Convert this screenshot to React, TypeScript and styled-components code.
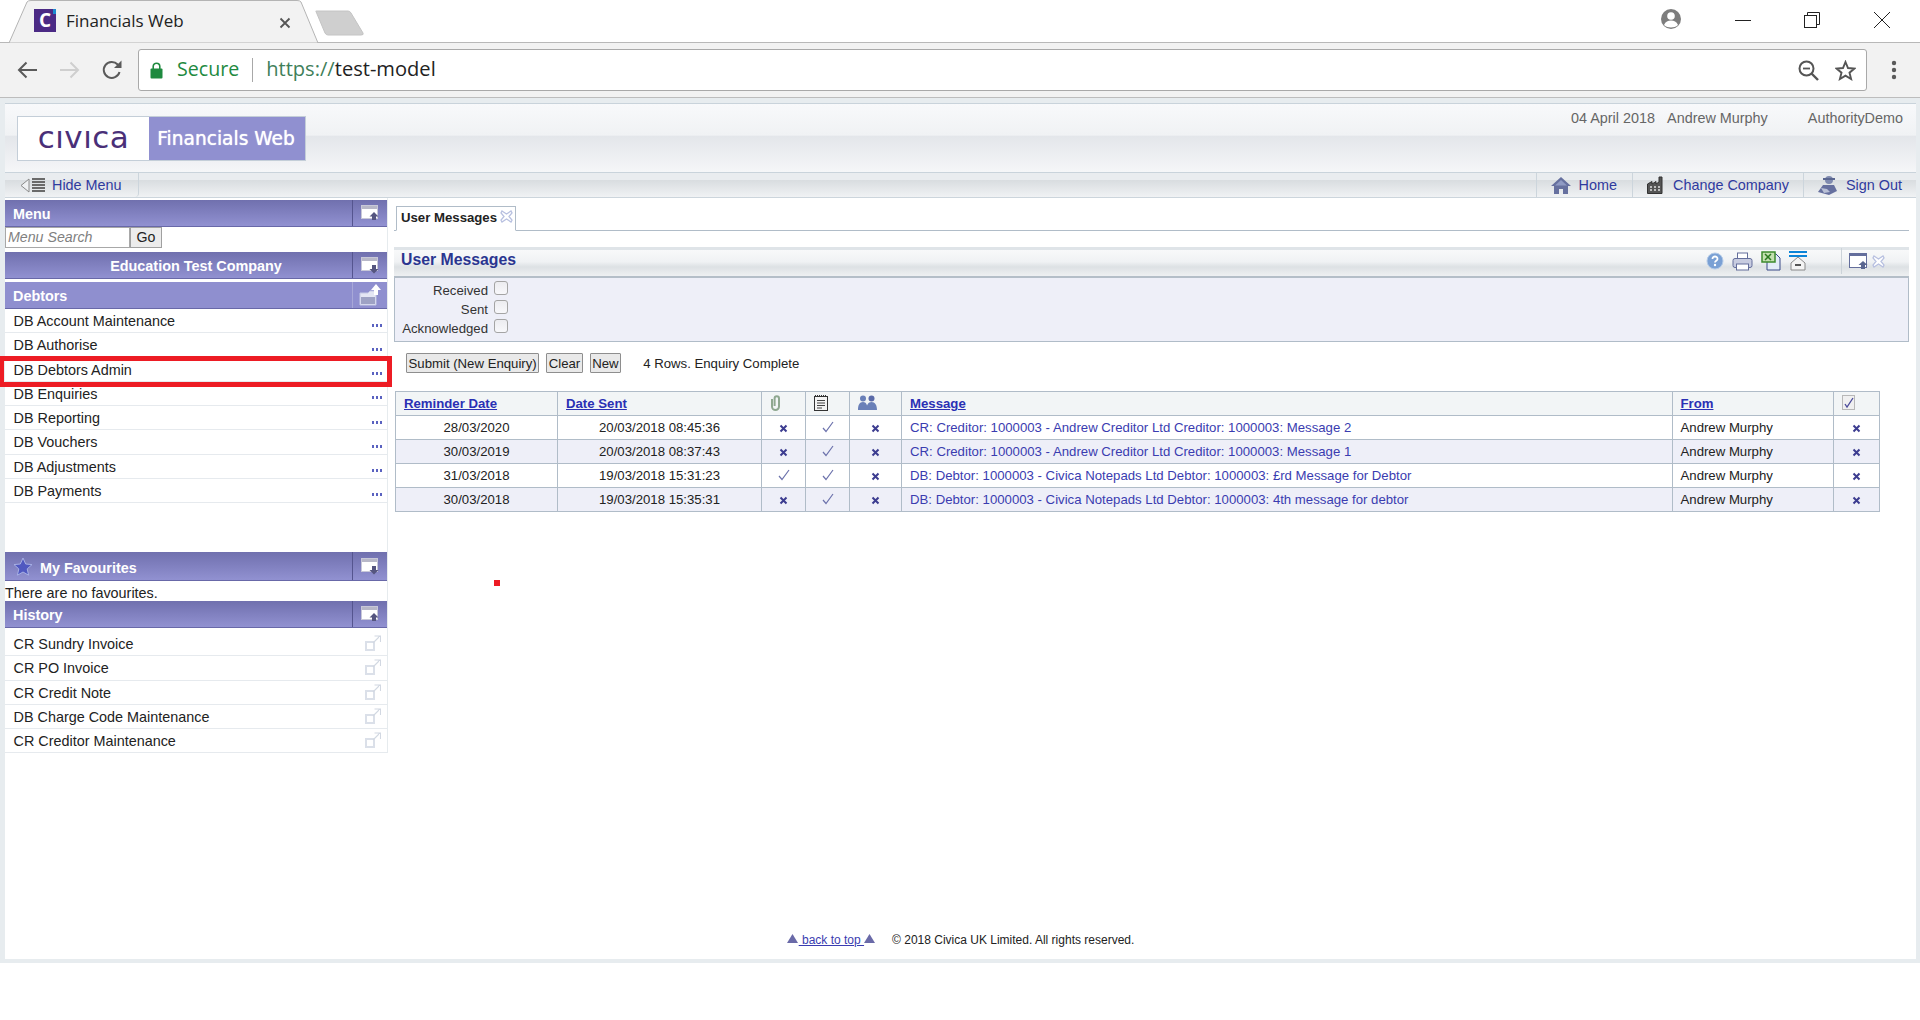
import React from 'react'
import styled, { createGlobalStyle, css } from 'styled-components'

const GlobalStyle = createGlobalStyle`
  html, body { margin: 0; padding: 0; background: #fff; }
  body { font-family: "Liberation Sans", Arial, sans-serif; overflow: hidden; }
  * { box-sizing: border-box; }
`

const Page = styled.div`
  width: 1920px;
  height: 1020px;
  overflow: hidden;
  background: #fff;
`

/* browser chrome */
const TabStrip = styled.div`
  height: 43px;
  display: flex;
  align-items: flex-start;
  border-bottom: 1px solid #b8b8b8;
  background: #fff;
`
const BrowserTab = styled.div`
  position: relative;
  width: 310px;
  height: 43px;
  margin-left: 9px;
  display: flex;
  align-items: center;
  padding: 0 0 2px 25px;
  font-family: "Open Sans", sans-serif;
  font-size: 17px;
  color: #222;
`
const TabShape = styled.svg`
  position: absolute;
  left: 0;
  top: 0;
`
const Favicon = styled.div`
  position: relative;
  width: 22px;
  height: 23px;
  margin-right: 10px;
  background: #4b2a85;
  color: #fff;
  font-size: 19px;
  font-weight: 700;
  line-height: 23px;
  text-align: center;
  &::after {
    content: '';
    position: absolute;
    right: 0;
    top: 0;
    width: 3px;
    height: 5px;
    background: #1c8ad0;
  }
`
const TabLabel = styled.span`
  position: relative;
  white-space: nowrap;
`
const TabClose = styled.svg`
  position: absolute;
  left: 270px;
  top: 17px;
`
const NewTab = styled.svg`
  margin: 10px 0 0 -5px;
  position: relative;
`
const WindowControls = styled.div`
  margin-left: auto;
  height: 42px;
  display: flex;
  padding-right: 7px;
`
const WinButton = styled.div<{ $w: number; $top?: number }>`
  width: ${p => p.$w}px;
  display: flex;
  padding-top: ${p => p.$top ?? 12}px;
  justify-content: center;
`
const Toolbar = styled.div`
  height: 55px;
  display: flex;
  align-items: center;
  background: #f2f2f2;
  border-bottom: 1px solid #bdbdbd;
  padding-left: 17px;
`
const NavArrow = styled.svg`
  flex: none;
  margin-right: 21px;
`
const Omnibox = styled.div`
  width: 1729px;
  height: 42px;
  margin-left: -6px;
  background: #fff;
  border: 1px solid #a9a9a9;
  border-radius: 3px;
  display: flex;
  align-items: center;
  padding: 0 0 0 11px;
  font-family: "Open Sans", sans-serif;
  font-size: 19.6px;
`
const Secure = styled.span`
  color: #1e8a3f;
  margin: -3px 0 0 14px;
`
const UrlDivider = styled.span`
  width: 1px;
  height: 24px;
  background: #a8a8a8;
  margin: 0 13px;
`
const UrlScheme = styled.span`
  color: #3f7f5a;
  font-size: 20.1px;
  margin-top: -3px;
`
const UrlHost = styled.span`
  color: #222;
  font-size: 20.1px;
  margin-top: -3px;
`
const OmniIcons = styled.div`
  margin-left: auto;
  display: flex;
  align-items: center;
  gap: 16px;
  padding-right: 10px;
`
const MenuDots = styled.svg`
  margin-left: 24px;
`

/* app frame */
const Frame = styled.div`
  height: 865px;
  padding: 5px 4px 4px 5px;
  background: #e7ecef;
`
const AppInner = styled.div`
  height: 856px;
  background: #fff;
  display: flex;
  flex-direction: column;
`
const Header = styled.div`
  height: 69px;
  flex: none;
  border-top: 1px solid #c9d3db;
  background: linear-gradient(to bottom, #f8f9fb 0, #f0f2f4 46%, #e3e6ea 47%, #f5f6f8 100%);
  display: flex;
  justify-content: space-between;
  padding: 12px 13px 0 12px;
`
const Logo = styled.div`
  display: flex;
  height: 45px;
  border: 1px solid #c4ced8;
`
const LogoWhite = styled.div`
  width: 131px;
  background: #fff;
  color: #4a2f78;
  font-family: "DejaVu Sans", sans-serif;
  font-size: 31px;
  letter-spacing: 0.5px;
  line-height: 41px;
  text-align: center;
`
const LogoProduct = styled.div`
  width: 156px;
  padding-right: 2px;
  background: #9090d0;
  color: #fff;
  font-family: "DejaVu Sans", sans-serif;
  font-size: 18.6px;
  line-height: 43px;
  text-align: center;
  white-space: nowrap;
  text-shadow: 0 0 1px #fff;
`
const Meta = styled.div`
  display: flex;
  font-size: 14.4px;
  color: #666;
  line-height: 26px;
  height: 26px;
  margin-top: -11px;
`
const MetaDate = styled.span`
  margin-right: 12px;
`
const MetaUser = styled.span`
  margin-right: 40px;
`
const NavBar = styled.div`
  height: 26px;
  flex: none;
  border-top: 1px solid #c9d3db;
  border-bottom: 1px solid #ccd5dc;
  background: linear-gradient(to bottom, #e9ecef 0, #e9ecef 30%, #d9dde0 31%, #f0f2f4 100%);
  display: flex;
  justify-content: space-between;
  font-size: 14.4px;
  color: #2f3a9e;
`
const NavGroup = styled.div`
  display: flex;
`
const NavItem = styled.div<{ $left?: boolean; $right?: number }>`
  display: flex;
  align-items: center;
  gap: 8px;
  padding: 0 ${p => p.$right ?? 14}px 0 14px;
  ${p =>
    p.$left
      ? css`
          width: 134px;
          padding: 0 0 0 15px;
          gap: 7px;
          border-right: 1px solid #ccd5dc;
          border-bottom-right-radius: 4px;
        `
      : css`
          border-left: 1px solid #ccd5dc;
        `}
`

const Body = styled.div`
  flex: 1;
  display: flex;
  min-height: 0;
`

/* sidebar */
const Sidebar = styled.div`
  position: relative;
  width: 383px;
  flex: none;
  align-self: flex-start;
  padding-top: 2px;
  border-right: 1px solid #e6ebee;
`
const PanelHeader = styled.div<{ $flat?: boolean; $h?: number; $gap?: number }>`
  height: ${p => p.$h ?? 27}px;
  margin-top: ${p => p.$gap ?? 0}px;
  width: 382px;
  display: flex;
  align-items: stretch;
  color: #fff;
  font-size: 14.4px;
  font-weight: 700;
  border-bottom: 1px solid #6868a8;
  background: ${p => (p.$flat ? '#8f8fcf' : 'linear-gradient(to bottom, #7070ae 0, #9191d1 100%)')};
`
const PanelTitle = styled.div<{ $center?: boolean; $lower?: boolean }>`
  flex: 1;
  display: flex;
  align-items: center;
  gap: 7px;
  padding: ${p => (p.$lower ? 4 : 2)}px 0 0 ${p => (p.$center ? 35 : 8)}px;
  justify-content: ${p => (p.$center ? 'center' : 'flex-start')};
`
const PanelIcon = styled.div<{ $flat?: boolean }>`
  width: 35px;
  flex: none;
  display: flex;
  align-items: center;
  justify-content: center;
  border-left: 1px solid ${p => (p.$flat ? '#a8a8d8' : '#55558f')};
`
const SearchRow = styled.div`
  display: flex;
  height: 21px;
`
const SearchInput = styled.input`
  width: 125px;
  height: 21px;
  padding: 0 2px 2px;
  border: 1px solid #a8a8a8;
  font-family: inherit;
  font-size: 14.2px;
  font-style: italic;
  outline: none;
  &::placeholder { color: #808080; opacity: 1; }
`
const GoButton = styled.button`
  width: 32px;
  height: 21px;
  padding: 0 0 2px;
  border: 1px solid #a0a0a0;
  background: #ececec;
  color: #222;
  font-family: inherit;
  font-size: 14.2px;
`
const MenuList = styled.div<{ $top?: number }>`
  width: 382px;
  padding-top: ${p => p.$top ?? 0}px;
`
const MenuRow = styled.div`
  height: 24.25px;
  display: flex;
  align-items: center;
  justify-content: space-between;
  padding: 1px 5px 0 8.5px;
  border-bottom: 1px solid #e6eaee;
  font-size: 14.4px;
  color: #222;
`
const Dots = styled.svg`
  margin-top: 8px;
`
const OpenGlyph = styled.svg`
  margin: -2px 1px 0 0;
`
const Spacer = styled.div<{ $h: number }>`
  height: ${p => p.$h}px;
`
const Note = styled.div`
  height: 20px;
  line-height: 24px;
  font-size: 14.4px;
  color: #222;
`
const Highlight = styled.div`
  position: absolute;
  left: -5px;
  top: 158px;
  width: 392px;
  height: 31px;
  border: 5px solid #ed1c24;
  border-left-width: 4px;
`

/* main */
const Main = styled.div`
  position: relative;
  flex: 1;
  min-width: 0;
  padding: 8px 7px 0 6px;
`
const TabRow = styled.div`
  height: 25px;
  border-bottom: 1px solid #b0bcc8;
  padding-left: 2px;
`
const ActiveTab = styled.div`
  display: inline-flex;
  align-items: flex-start;
  gap: 3px;
  height: 25px;
  padding: 3px 2px 0 4px;
  background: #fff;
  border: 1px solid #b0bcc8;
  border-bottom-color: #fff;
  font-size: 13.2px;
  font-weight: 700;
  color: #222;
  line-height: 16px;
`
const TitleBar = styled.div`
  height: 31px;
  margin-top: 16px;
  border-top: 3px solid #dfe4e8;
  border-bottom: 2px solid #b4bec8;
  background: linear-gradient(to bottom, #f8f9fa 0, #f0f2f4 45%, #dde1e4 65%, #eef0f2 100%);
  display: flex;
  align-items: center;
  justify-content: space-between;
  padding-left: 7px;
`
const TitleText = styled.div`
  font-size: 15.8px;
  font-weight: 700;
  color: #2a3590;
  margin-top: -7px;
`
const TitleTools = styled.div`
  display: flex;
  align-items: center;
  height: 100%;
`
const ToolGroup = styled.div`
  display: flex;
  align-items: center;
  gap: 8px;
  padding-right: 34px;
  margin-top: -4px;
`
const ToolEnd = styled.div`
  display: flex;
  align-items: center;
  gap: 4px;
  height: 100%;
  padding: 0 24px 0 7px;
  margin-top: -4px;
  border-left: 1px solid #ccd3d9;
`
const FilterPanel = styled.div`
  height: 64px;
  background: #eeeff8;
  border: 1px solid #b0bcc8;
  border-top: none;
  padding-top: 2px;
  display: grid;
  grid-template-columns: 93px 14px;
  grid-auto-rows: 19px;
  column-gap: 6px;
`
const FilterLabel = styled.label`
  text-align: right;
  font-size: 13.2px;
  color: #333;
  line-height: 21px;
`
const FilterBox = styled.span`
  width: 14px;
  height: 14px;
  margin-top: 1px;
  border: 1px solid #a4a4a4;
  border-radius: 3px;
  background: linear-gradient(to bottom, #ececf0, #f8f8fb);
`
const ActionRow = styled.div`
  display: flex;
  align-items: center;
  gap: 7px;
  height: 20px;
  margin: 11px 0 0 12px;
  font-size: 13.2px;
  color: #222;
`
const ActionButton = styled.button`
  height: 20px;
  padding: 0 1.5px;
  border: 1px solid #8e8e8e;
  border-radius: 1px;
  background: #e9e9e9;
  font-family: inherit;
  font-size: 13.2px;
  color: #222;
`
const StatusText = styled.span`
  margin-left: 15px;
`
const Grid = styled.table`
  width: 1484px;
  margin: 18px 0 0 1px;
  table-layout: fixed;
  border-collapse: collapse;
  font-size: 13.2px;
  color: #222;
`
const HeadCell = styled.th`
  height: 24px;
  padding: 0 0 0 8px;
  text-align: left;
  background: #f2f5f6;
  border: 1px solid #b0bcc8;
  font-weight: 700;
  & > svg {
    display: block;
    margin-top: -2px;
  }
`
const SortLink = styled.a`
  color: #2a30b4;
  text-decoration: underline;
`
const GridRow = styled.tr<{ $alt?: boolean }>`
  background: ${p => (p.$alt ? '#eeeff8' : '#fff')};
`
const Cell = styled.td<{ $center?: boolean }>`
  height: 24px;
  padding: 0 0 0 ${p => (p.$center ? 0 : 8)}px;
  text-align: ${p => (p.$center ? 'center' : 'left')};
  border: 1px solid #b0bcc8;
  white-space: nowrap;
  overflow: hidden;
`
const MessageText = styled.span`
  color: #3a3cb0;
`
const RedDot = styled.div`
  position: absolute;
  left: 106px;
  top: 382px;
  width: 6px;
  height: 6px;
  background: #ed1c24;
`

const Footer = styled.div`
  height: 38px;
  flex: none;
  display: flex;
  align-items: center;
  justify-content: center;
  font-size: 12px;
  color: #222;
`
const BackTop = styled.a`
  display: flex;
  align-items: center;
  color: #3a3cb0;
  margin-right: 17px;
  text-decoration: none;
  & > svg {
    margin-top: -4px;
  }
`
const BackLink = styled.span`
  text-decoration: underline;
  padding: 0 0 0 1px;
  white-space: pre;
`

/* drawings */
const WindowIcon = ({ down }: { down?: boolean }) => (
  <svg width="19" height="17" viewBox="0 0 19 17">
    <rect x="0.5" y="0.5" width="16" height="13" fill="#fff" stroke="#c8c8d8" />
    <rect x="1" y="1" width="15" height="3" fill="#b8b8c8" />
    {down ? (
      <path d="M11 8h4v4h2.5l-4.5 4.5L8.500 12H11z" fill="#55557f" />
    ) : (
      <path d="M13 7l4.500 4.500H15V15h-4v-3.500H8.500z" fill="#55557f" />
    )}
  </svg>
)
const FolderUp = () => (
  <svg width="23" height="22" viewBox="0 0 23 22">
    <path d="M1 9h8l2-2h6v14H1z" fill="#e4e6f4" stroke="#c4c8e4" />
    <rect x="2" y="13" width="14" height="7" fill="#9ea2c4" />
    <path d="M17 0l5 6h-3v5h-4V6h-3z" fill="#fff" />
  </svg>
)
const MoreDots = () => (
  <Dots width="10" height="3" viewBox="0 0 10 3">
    <rect x="0" y="0" width="2" height="3" fill="#5a62c0" />
    <rect x="4" y="0" width="2" height="3" fill="#5a62c0" />
    <rect x="8" y="0" width="2" height="3" fill="#5a62c0" />
  </Dots>
)
const OpenIcon = () => (
  <OpenGlyph width="16" height="16" viewBox="0 0 16 16">
    <rect x="1" y="7" width="8" height="8" fill="none" stroke="#dbe0e9" strokeWidth="2" />
    <path d="M8 8L15 1M9.500 1H15.500V7" fill="none" stroke="#d2d8e2" strokeWidth="1.100" />
  </OpenGlyph>
)
const CrossMark = () => (
  <svg width="9" height="9" viewBox="0 0 9 9" style={{ verticalAlign: -1 }}>
    <path d="M1.500 1.500L7.500 7.500M7.500 1.500L1.500 7.500" stroke="#3c3c90" strokeWidth="2" />
  </svg>
)
const TickMark = () => (
  <svg width="12" height="12" viewBox="0 0 12 12" style={{ verticalAlign: -1 }}>
    <path d="M1 7l3 3.500L11 1" fill="none" stroke="#6c72ac" strokeWidth="1.200" />
  </svg>
)
const TabX = ({ color = '#b8c0e0' }: { color?: string }) => (
  <svg width="13" height="13" viewBox="0 0 13 13">
    <path
      d="M2 1l4.500 3L11 1l1 2-3 3.500 3 3.500-1 2-4.500-3L2 12 1 10l3-3.500L1 3z"
      fill="#fff"
      stroke={color}
      strokeWidth="1.300"
    />
  </svg>
)

const Clip = () => (
  <svg width="11" height="16" viewBox="0 0 11 16">
    <path d="M2 4v7.500a3.500 3.500 0 007 0V3.500a2.200 2.200 0 00-4.400 0V11" fill="none" stroke="#8fa890" strokeWidth="2" />
  </svg>
)
const NotePad = () => (
  <svg width="14" height="16" viewBox="0 0 14 16">
    <rect x="0.500" y="1.500" width="13" height="14" fill="#f4f4f4" stroke="#333" />
    <path d="M1 1h12" stroke="#333" strokeWidth="2" strokeDasharray="1 1" />
    <path d="M3 5.500h8M3 8h8M3 10.500h8M3 13h5" stroke="#444" />
  </svg>
)
const People = () => (
  <svg width="19" height="15" viewBox="0 0 19 15">
    <circle cx="5" cy="3.500" r="3" fill="#6a80b8" />
    <circle cx="13.500" cy="3.500" r="3" fill="#5a6aa8" />
    <path d="M0 15c0-5 1.500-8 5-8s4.500 3 4.500 8zM8.500 15c0-5 1.500-8 5-8s5.500 3 5.500 8z" fill="#6a80b8" />
  </svg>
)
const CheckDoc = () => (
  <svg width="14" height="15" viewBox="0 0 14 15">
    <rect x="0.500" y="0.500" width="12" height="14" fill="#f0f0f0" stroke="#b8b8b8" />
    <path d="M3 9l2 3 6-9" fill="none" stroke="#4a4a9a" strokeWidth="1.300" />
  </svg>
)
const UpTriangle = () => (
  <svg width="11" height="9" viewBox="0 0 11 9">
    <path d="M5.500 0L11 9H0z" fill="#6a6aa8" />
  </svg>
)

const menuItems = [
  'DB Account Maintenance',
  'DB Authorise',
  'DB Debtors Admin',
  'DB Enquiries',
  'DB Reporting',
  'DB Vouchers',
  'DB Adjustments',
  'DB Payments',
]
const historyItems = [
  'CR Sundry Invoice',
  'CR PO Invoice',
  'CR Credit Note',
  'DB Charge Code Maintenance',
  'CR Creditor Maintenance',
]
const messages = [
  {
    reminder: '28/03/2020',
    sent: '20/03/2018 08:45:36',
    attach: false,
    text: 'CR: Creditor: 1000003 - Andrew Creditor Ltd Creditor: 1000003: Message 2',
  },
  {
    reminder: '30/03/2019',
    sent: '20/03/2018 08:37:43',
    attach: false,
    text: 'CR: Creditor: 1000003 - Andrew Creditor Ltd Creditor: 1000003: Message 1',
  },
  {
    reminder: '31/03/2018',
    sent: '19/03/2018 15:31:23',
    attach: true,
    text: 'DB: Debtor: 1000003 - Civica Notepads Ltd Debtor: 1000003: £rd Message for Debtor',
  },
  {
    reminder: '30/03/2018',
    sent: '19/03/2018 15:35:31',
    attach: false,
    text: 'DB: Debtor: 1000003 - Civica Notepads Ltd Debtor: 1000003: 4th message for debtor',
  },
]

export default function App() {
  return (
    <Page>
      <GlobalStyle />
      <TabStrip>
        <BrowserTab>
          <TabShape width="310" height="43" viewBox="0 0 310 43">
            <path d="M0 43 L18 2 Q19 0.500 22 0.500 L288 0.500 Q291 0.500 292 2 L309 43 Z" fill="#f2f2f2" stroke="#b4b4b4" />
          </TabShape>
          <Favicon>C</Favicon>
          <TabLabel>Financials Web</TabLabel>
          <TabClose width="12" height="12" viewBox="0 0 12 12">
            <path d="M1.500 1.500L10.500 10.500M10.500 1.500L1.500 10.500" stroke="#555" strokeWidth="1.800" />
          </TabClose>
        </BrowserTab>
        <NewTab width="51" height="26" viewBox="0 0 51 26">
          <path d="M2 1.500 Q1 1 3 1 L34 1 Q36 1 37 3 L49 23 Q50 25 47 25 L14 25 Q12 25 11 23 Z" fill="#cfcfcf" stroke="#c4c4c4" />
        </NewTab>
        <WindowControls>
          <WinButton $w={84} $top={8}>
            <svg width="22" height="22" viewBox="0 0 22 22">
              <circle cx="11" cy="11" r="10" fill="#7d7d7d" />
              <circle cx="11" cy="8" r="3.800" fill="#fff" />
              <path d="M4 17c1.500-3.500 4-4.500 7-4.500s5.500 1 7 4.500c-2 1.800-4.500 2.500-7 2.500S6 18.800 4 17z" fill="#fff" />
            </svg>
          </WinButton>
          <WinButton $w={60}>
            <svg width="16" height="16" viewBox="0 0 16 16">
              <path d="M0 8.500h16" stroke="#222" />
            </svg>
          </WinButton>
          <WinButton $w={78}>
            <svg width="16" height="16" viewBox="0 0 16 16">
              <path d="M3.500 3V.500h12v12H13" fill="none" stroke="#222" />
              <rect x="0.500" y="3.500" width="12" height="12" fill="none" stroke="#222" />
            </svg>
          </WinButton>
          <WinButton $w={62}>
            <svg width="16" height="16" viewBox="0 0 16 16">
              <path d="M0 0L16 16M16 0L0 16" stroke="#222" />
            </svg>
          </WinButton>
        </WindowControls>
      </TabStrip>
      <Toolbar>
        <NavArrow width="21" height="18" viewBox="0 0 21 18">
          <path d="M20 9H2M9.500 1.500L2 9l7.500 7.500" fill="none" stroke="#5a5a5a" strokeWidth="2" />
        </NavArrow>
        <NavArrow width="21" height="18" viewBox="0 0 21 18">
          <path d="M1 9h18M11.500 1.500L19 9l-7.500 7.500" fill="none" stroke="#cfcfcf" strokeWidth="2" />
        </NavArrow>
        <NavArrow width="22" height="22" viewBox="0 0 22 22">
          <path d="M18.500 13a8 8 0 11-1.800-7.500L19 8" fill="none" stroke="#5a5a5a" strokeWidth="2" />
          <path d="M20.500 1.500v7.500H13z" fill="#5a5a5a" />
        </NavArrow>
        <Omnibox>
          <svg width="13" height="17" viewBox="0 0 13 17">
            <path d="M3.200 7V4.500a3.300 3.300 0 016.600 0V7" fill="none" stroke="#1e8a3f" strokeWidth="1.600" />
            <rect x="0.500" y="6.500" width="12" height="10" rx="1" fill="#1e8a3f" />
          </svg>
          <Secure>Secure</Secure>
          <UrlDivider />
          <UrlScheme>https://</UrlScheme>
          <UrlHost>test-model</UrlHost>
          <OmniIcons>
            <svg width="21" height="21" viewBox="0 0 21 21">
              <circle cx="8.500" cy="8.500" r="7" fill="none" stroke="#555" strokeWidth="2" />
              <path d="M13.500 13.500L20 20" stroke="#555" strokeWidth="2.400" />
              <path d="M5 8.500h7" stroke="#555" strokeWidth="1.800" />
            </svg>
            <svg width="21" height="21" viewBox="0 0 21 21">
              <path
                d="M10.500 2l2.500 6 6.500.500-5 4.200 1.600 6.300-5.600-3.400-5.600 3.400 1.600-6.300-5-4.200L8 8z"
                fill="none"
                stroke="#555"
                strokeWidth="1.900"
              />
            </svg>
          </OmniIcons>
        </Omnibox>
        <MenuDots width="6" height="20" viewBox="0 0 6 20">
          <circle cx="3" cy="3" r="2.200" fill="#5a5a5a" />
          <circle cx="3" cy="10" r="2.200" fill="#5a5a5a" />
          <circle cx="3" cy="17" r="2.200" fill="#5a5a5a" />
        </MenuDots>
      </Toolbar>

      <Frame>
        <AppInner>
          <Header>
            <Logo>
              <LogoWhite>cıvıca</LogoWhite>
              <LogoProduct>Financials Web</LogoProduct>
            </Logo>
            <Meta>
              <MetaDate>04 April 2018</MetaDate>
              <MetaUser>Andrew Murphy</MetaUser>
              <span>AuthorityDemo</span>
            </Meta>
          </Header>
          <NavBar>
            <NavGroup>
              <NavItem $left>
                <svg width="25" height="17" viewBox="0 0 25 17">
                  <path d="M1 8.500L9 2v13z" fill="#eef0f2" stroke="#8a8a8a" />
                  <path d="M12 2h13M12 5h13M12 8h13M12 11h13M12 14h13" stroke="#6a6a6a" strokeWidth="2" />
                </svg>
                Hide Menu
              </NavItem>
            </NavGroup>
            <NavGroup>
              <NavItem $right={15}>
                <svg width="20" height="18" viewBox="0 0 20 18">
                  <path d="M10 1L0 10h3v8h5v-5h4v5h5v-8h3z" fill="#66709f" />
                  <path d="M10 4L4 9.500h12z" fill="#8f9ac4" />
                </svg>
                Home
              </NavItem>
              <NavItem>
                <svg width="18" height="18" viewBox="0 0 18 18">
                  <path d="M0.500 17.500V8L5 5.500V8l4-2.500V8l3-2V1h3v16.500z" fill="#555" stroke="#333" />
                  <path d="M3 11h2M7 11h2M11 11h2M3 14h2M7 14h2M11 14h2" stroke="#e0e0e0" strokeWidth="1.500" />
                </svg>
                Change Company
              </NavItem>
              <NavItem $right={14}>
                <svg width="20" height="20" viewBox="0 0 20 20">
                  <circle cx="11" cy="5" r="4" fill="#7f8aaf" />
                  <path d="M5 3h12v2H5z" fill="#5a6690" />
                  <path d="M5 10h11l3 6-8 4-11-3z" fill="#66709f" />
                  <path d="M3 13l6 1 3 3-6 1z" fill="#b9c0d6" />
                </svg>
                Sign Out
              </NavItem>
            </NavGroup>
          </NavBar>
          <Body>
            <Sidebar>
              <PanelHeader>
                <PanelTitle>Menu</PanelTitle>
                <PanelIcon>
                  <WindowIcon />
                </PanelIcon>
              </PanelHeader>
              <SearchRow>
                <SearchInput placeholder="Menu Search" />
                <GoButton>Go</GoButton>
              </SearchRow>
              <PanelHeader $gap={4}>
                <PanelTitle $center>Education Test Company</PanelTitle>
                <PanelIcon>
                  <WindowIcon down />
                </PanelIcon>
              </PanelHeader>
              <PanelHeader $flat $gap={3}>
                <PanelTitle>Debtors</PanelTitle>
                <PanelIcon $flat>
                  <FolderUp />
                </PanelIcon>
              </PanelHeader>
              <MenuList>
                {menuItems.map(item => (
                  <MenuRow key={item}>
                    {item}
                    <MoreDots />
                  </MenuRow>
                ))}
              </MenuList>
              <Spacer $h={49} />
              <PanelHeader $h={29}>
                <PanelTitle $lower>
                  <svg width="20" height="19" viewBox="0 0 20 19" style={{ marginTop: -3 }}>
                    <path
                      d="M10 1l2.700 6 6.300.600-4.800 4.300 1.400 6.300L10 15l-5.600 3.200 1.400-6.300L1 7.600 7.300 7z"
                      fill="#5058c0"
                      stroke="#a8b0e4"
                    />
                  </svg>
                  My Favourites
                </PanelTitle>
                <PanelIcon>
                  <WindowIcon down />
                </PanelIcon>
              </PanelHeader>
              <Note>There are no favourites.</Note>
              <PanelHeader>
                <PanelTitle>History</PanelTitle>
                <PanelIcon>
                  <WindowIcon />
                </PanelIcon>
              </PanelHeader>
              <MenuList $top={4}>
                {historyItems.map(item => (
                  <MenuRow key={item}>
                    {item}
                    <OpenIcon />
                  </MenuRow>
                ))}
              </MenuList>
              <Highlight />
            </Sidebar>
            <Main>
              <TabRow>
                <ActiveTab>
                  User Messages
                  <TabX />
                </ActiveTab>
              </TabRow>
              <TitleBar>
                <TitleText>User Messages</TitleText>
                <TitleTools>
                  <ToolGroup>
                    <svg width="18" height="18" viewBox="0 0 18 18">
                      <circle cx="9" cy="9" r="8" fill="#7aa0d4" stroke="#b4cbe8" />
                      <path d="M6.500 7a2.500 2.500 0 115 0c0 1.800-2.500 1.800-2.500 3.500" fill="none" stroke="#fff" strokeWidth="1.800" />
                      <circle cx="9" cy="13" r="1.200" fill="#fff" />
                    </svg>
                    <svg width="21" height="19" viewBox="0 0 21 19">
                      <rect x="5.500" y="1" width="10" height="6" fill="#fff" stroke="#646e9c" />
                      <rect x="1" y="6.500" width="19" height="9" rx="2" fill="#c8cce0" stroke="#646e9c" />
                      <rect x="4.500" y="12" width="12" height="6" fill="#fff" stroke="#646e9c" />
                    </svg>
                    <svg width="20" height="20" viewBox="0 0 20 20">
                      <path d="M6 3h9l4 4v12H6z" fill="#e4ecf8" stroke="#3a4a88" />
                      <rect x="1" y="1" width="13" height="10" fill="#c4e0b0" stroke="#3c8a2c" strokeWidth="1.500" />
                      <path d="M4 3l6 6M10 3L4 9" stroke="#2c7a20" strokeWidth="1.500" />
                    </svg>
                    <svg width="18" height="20" viewBox="0 0 18 20">
                      <rect x="0" y="0" width="18" height="2" fill="#0a84d8" />
                      <rect x="0" y="4" width="18" height="2" fill="#0a84d8" />
                      <path d="M9 6L2 12v7h14v-7z" fill="#f4f4f4" stroke="#8a8a8a" />
                      <path d="M6 14h6" stroke="#222" strokeWidth="1.500" />
                    </svg>
                  </ToolGroup>
                  <ToolEnd>
                    <svg width="19" height="17" viewBox="0 0 19 17">
                      <rect x="0.500" y="0.500" width="17" height="14" fill="#fff" stroke="#646e9c" />
                      <rect x="1" y="1" width="16" height="2" fill="#646e9c" />
                      <path d="M14 8l4.500 4H16v4h-4v-4H9.500z" fill="#5a6690" />
                    </svg>
                    <TabX />
                  </ToolEnd>
                </TitleTools>
              </TitleBar>
              <FilterPanel>
                {['Received', 'Sent', 'Acknowledged'].map(label => (
                  <React.Fragment key={label}>
                    <FilterLabel>{label}</FilterLabel>
                    <FilterBox />
                  </React.Fragment>
                ))}
              </FilterPanel>
              <ActionRow>
                <ActionButton>Submit (New Enquiry)</ActionButton>
                <ActionButton>Clear</ActionButton>
                <ActionButton>New</ActionButton>
                <StatusText>4 Rows. Enquiry Complete</StatusText>
              </ActionRow>
              <Grid>
                <colgroup>
                  <col style={{ width: 162 }} />
                  <col style={{ width: 204 }} />
                  <col style={{ width: 44 }} />
                  <col style={{ width: 44 }} />
                  <col style={{ width: 52 }} />
                  <col style={{ width: 770.5 }} />
                  <col style={{ width: 161.5 }} />
                  <col style={{ width: 46 }} />
                </colgroup>
                <thead>
                  <tr>
                    <HeadCell>
                      <SortLink>Reminder Date</SortLink>
                    </HeadCell>
                    <HeadCell>
                      <SortLink>Date Sent</SortLink>
                    </HeadCell>
                    <HeadCell>
                      <Clip />
                    </HeadCell>
                    <HeadCell>
                      <NotePad />
                    </HeadCell>
                    <HeadCell>
                      <People />
                    </HeadCell>
                    <HeadCell>
                      <SortLink>Message</SortLink>
                    </HeadCell>
                    <HeadCell>
                      <SortLink>From</SortLink>
                    </HeadCell>
                    <HeadCell>
                      <CheckDoc />
                    </HeadCell>
                  </tr>
                </thead>
                <tbody>
                  {messages.map((m, i) => (
                    <GridRow key={m.sent} $alt={i % 2 === 1}>
                      <Cell $center>{m.reminder}</Cell>
                      <Cell $center>{m.sent}</Cell>
                      <Cell $center>{m.attach ? <TickMark /> : <CrossMark />}</Cell>
                      <Cell $center>
                        <TickMark />
                      </Cell>
                      <Cell $center>
                        <CrossMark />
                      </Cell>
                      <Cell>
                        <MessageText>{m.text}</MessageText>
                      </Cell>
                      <Cell>Andrew Murphy</Cell>
                      <Cell $center>
                        <CrossMark />
                      </Cell>
                    </GridRow>
                  ))}
                </tbody>
              </Grid>
              <RedDot />
            </Main>
          </Body>
          <Footer>
            <BackTop>
              <UpTriangle />
              <BackLink> back to top </BackLink>
              <UpTriangle />
            </BackTop>
            © 2018 Civica UK Limited. All rights reserved.
          </Footer>
        </AppInner>
      </Frame>
    </Page>
  )
}
